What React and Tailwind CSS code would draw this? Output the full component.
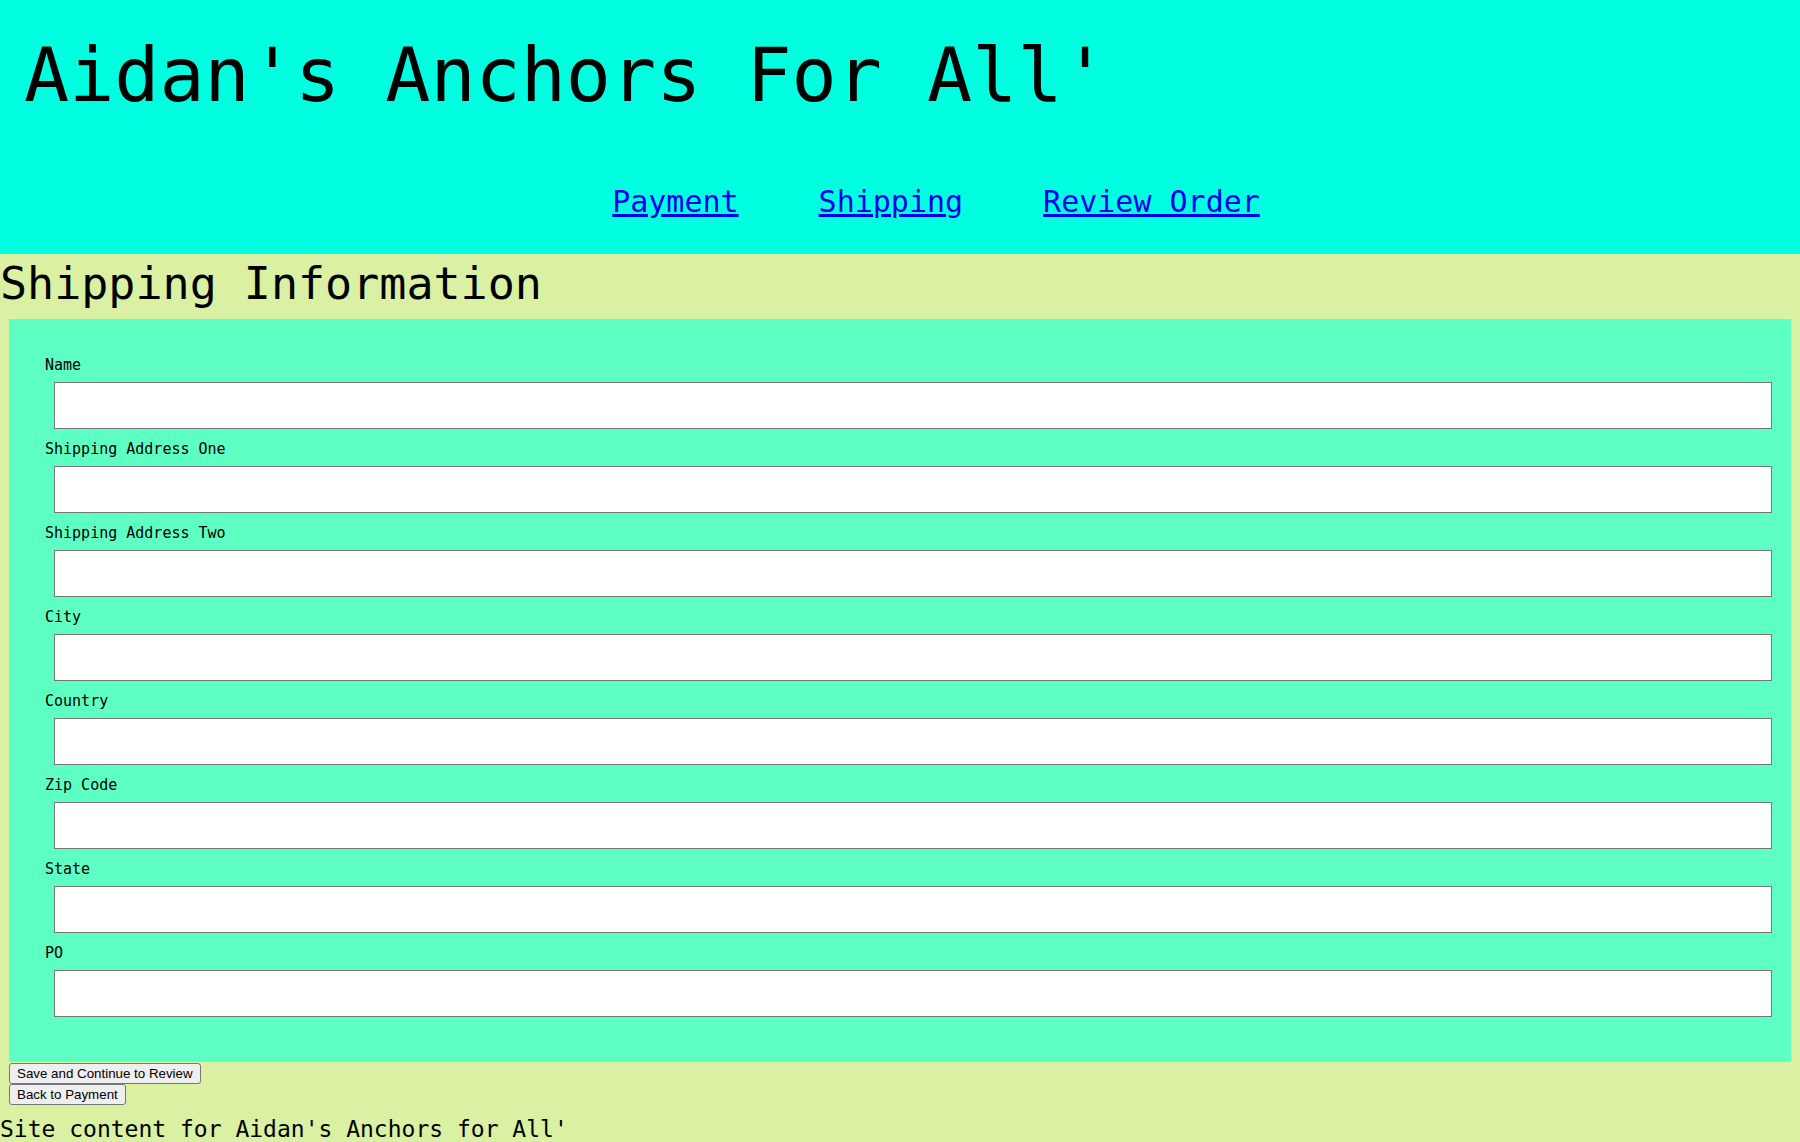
import React from 'react';

const fields = [
  'Name',
  'Shipping Address One',
  'Shipping Address Two',
  'City',
  'Country',
  'Zip Code',
  'State',
  'PO',
];

const mono = "font-['DejaVu_Sans_Mono','Liberation_Mono',monospace]";

const App = () => {
  return (
    <div className={`min-h-[1142px] bg-[#daf0a3] text-black ${mono}`}>
      {/* Header */}
      <header className="bg-[#00ffe1] pt-[25px] pb-[32px]">
        <h1 className="pl-[24px] text-[75px] leading-[100px] font-normal whitespace-nowrap">
          Aidan's Anchors For All'
        </h1>
        <nav className="mt-[57px] flex justify-center gap-[80px] pl-[72px] text-[30px] leading-[40px]">
          <a href="#payment" className="text-[#0000ee] underline">Payment</a>
          <a href="#shipping" className="text-[#0000ee] underline">Shipping</a>
          <a href="#review" className="text-[#0000ee] underline">Review Order</a>
        </nav>
      </header>

      {/* Main */}
      <main>
        <h2 className="text-[45px] leading-[60px] font-normal whitespace-nowrap">Shipping Information</h2>

        <form className="mx-[9px] mt-[5px] bg-[#5effc2] pt-[36px] pb-[45px]">
          {fields.map((label, i) => (
            <div key={label} className={i === 0 ? '' : 'mt-[10px]'}>
              <label className="block pl-[36px] text-[15px] leading-[20px]">{label}</label>
              <div className="mt-[7px] pl-[45px] pr-[19px]">
                <input
                  type="text"
                  className="block w-full h-[47px] bg-white border border-[#767676]"
                />
              </div>
            </div>
          ))}
        </form>

        <div className="mt-[1px] ml-[9px] flex flex-col items-start font-['Liberation_Sans',Arial,sans-serif] text-[13.33px]">
          <button className="h-[21px] px-[7px] leading-[16px] bg-[#efefef] border border-[#767676] rounded-[3px]">
            Save and Continue to Review
          </button>
          <button className="h-[21px] px-[7px] leading-[16px] bg-[#efefef] border border-[#767676] rounded-[3px]">
            Back to Payment
          </button>
        </div>

        <p className="mt-[9px] text-[23px] leading-[30px] whitespace-nowrap">
          Site content for Aidan's Anchors for All'
        </p>
      </main>
    </div>
  );
};

export default App;
